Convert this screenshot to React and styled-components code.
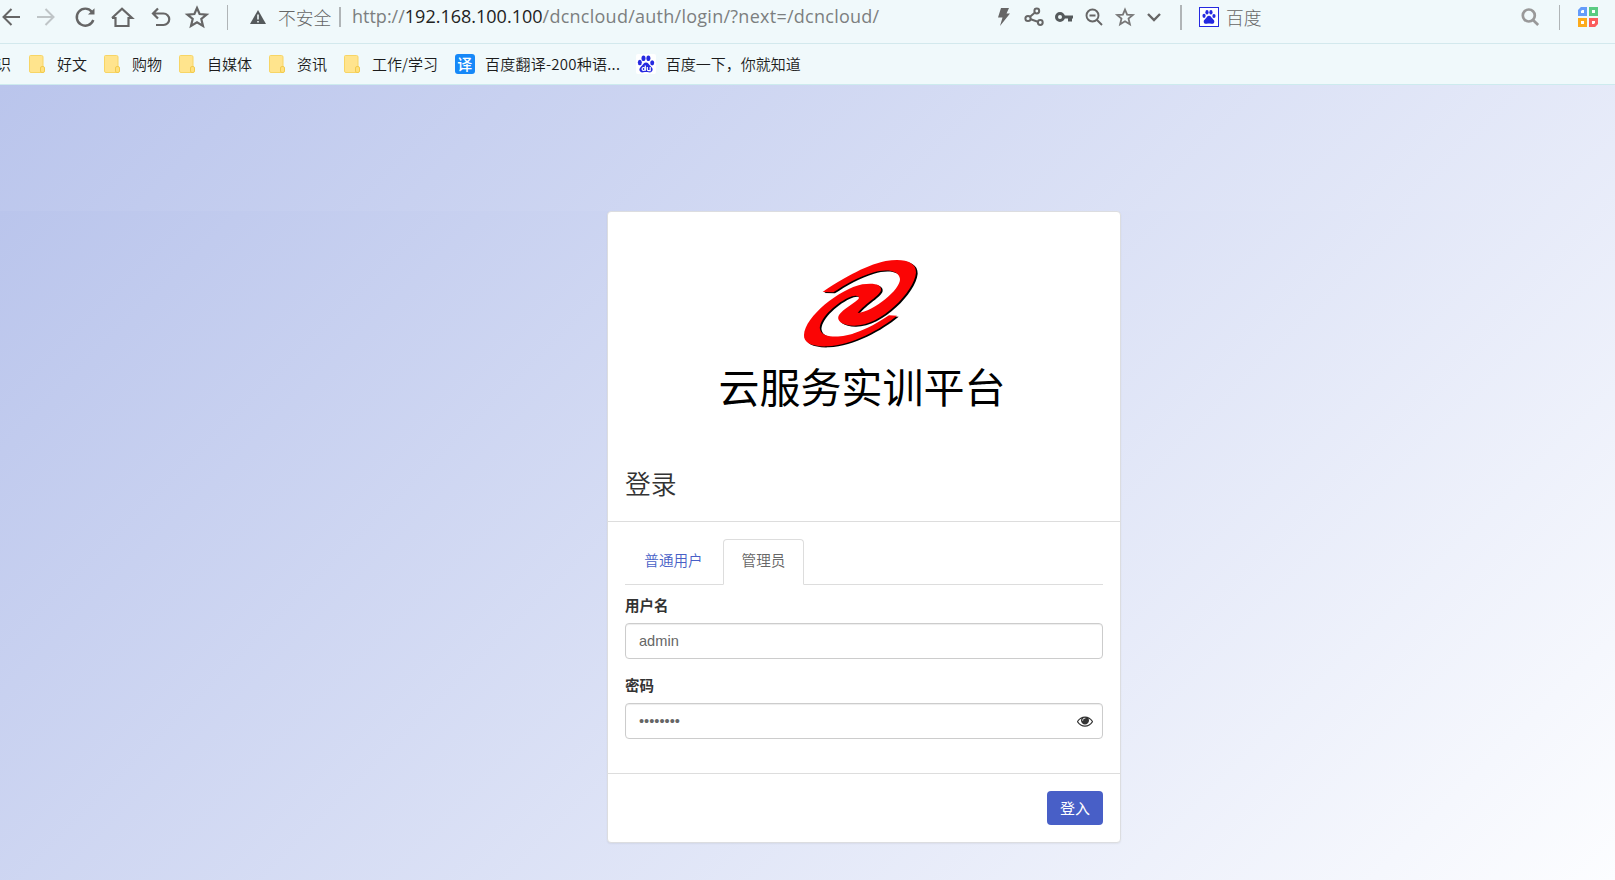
import React from "react";
import styled, { createGlobalStyle } from "styled-components";

const Global = createGlobalStyle`
  * { box-sizing: border-box; }
  html, body { margin: 0; height: 100%; overflow: hidden; }
  body { font-family: "Noto Sans CJK SC", sans-serif; color: #333; }
`;

const Window = styled.div`
  display: flex;
  flex-direction: column;
  width: 1615px;
  height: 880px;
  overflow: hidden;
`;

const AddressBar = styled.header`
  display: flex;
  align-items: center;
  flex: none;
  height: 44px;
  padding-bottom: 9px;
  background: #f0f9fb;
  border-bottom: 1px solid #d3e9ed;
`;

const Slot = styled.span`
  display: flex;
  justify-content: center;
  align-items: center;
  flex: none;
  width: ${(p) => p.$w}px;
  color: ${(p) => p.$color || "#666"};
  svg { display: block; overflow: visible; }
`;

const Divider = styled.span`
  flex: none;
  width: ${(p) => p.$w || 1}px;
  height: ${(p) => p.$h || 25}px;
  margin: 0 ${(p) => p.$right || 0}px 0 ${(p) => p.$left || 0}px;
  background: #b0b5b7;
`;

const BarText = styled.span`
  flex: none;
  width: ${(p) => p.$w}px;
  padding-bottom: 1px;
  font-size: 17.8px;
  font-weight: 300;
  line-height: 24px;
  color: #666;
  white-space: nowrap;
`;

const Url = styled.span`
  flex: none;
  width: 639px;
  padding-bottom: 2px;
  font-family: "Open Sans", "Noto Sans", sans-serif;
  font-size: 18px;
  line-height: 24px;
  color: #7c7f80;
  white-space: nowrap;
  b { font-weight: 400; color: #222; }
`;

const UrlPath = styled.span`letter-spacing: 0.26px;`;

const Spacer = styled.span`flex: 1;`;

const Gap = styled.span`
  flex: none;
  width: ${(p) => p.$w}px;
`;

const Bookmarks = styled.nav`
  display: flex;
  align-items: center;
  flex: none;
  height: 41px;
  background: #f0f9fb;
  border-bottom: 1px solid #cdebee;
`;

const Bookmark = styled.span`
  display: flex;
  align-items: center;
  flex: none;
  gap: ${(p) => p.$gap || 12}px;
  margin-right: ${(p) => p.$after || 17}px;
  font-size: 15px;
  font-weight: 350;
  line-height: 22px;
  letter-spacing: ${(p) => p.$spacing || 0}px;
  color: #1c1c1c;
  white-space: nowrap;
  svg { display: block; flex: none; }
`;

const BookmarkEdge = styled(Bookmark)`
  margin-left: -4px;
  margin-right: 18px;
`;

const TranslateIcon = styled.span`
  display: flex;
  align-items: center;
  justify-content: center;
  width: 20px;
  height: 20px;
  border-radius: 3px;
  background: #1688f8;
  color: #fff;
  font-size: 15px;
  font-weight: 500;
  line-height: 20px;
`;

const Page = styled.main`
  display: flex;
  flex: 1;
  justify-content: center;
  align-items: flex-start;
  padding: 126px 0 0 113px;
  background:
    linear-gradient(135deg, #bac5ec 0, #fcfdff 1740px) 0 0 / 100% 126px no-repeat,
    linear-gradient(135deg, #bac5ec, #fcfdff) 0 126px / 100% 670px no-repeat;
`;

const Card = styled.form`
  width: 514px;
  height: 632px;
  background: #fff;
  border: 1px solid #dcdde0;
  border-radius: 4px;
  box-shadow: 0 1px 2px rgba(0, 0, 0, 0.06);
`;

const Brand = styled.div`
  display: flex;
  flex-direction: column;
  align-items: center;
  height: 237px;
  padding-top: 38px;
  svg { display: block; margin-right: 10px; }
`;

const BrandName = styled.div`
  margin: -5px 4px 0 0;
  font-size: 41px;
  line-height: 60px;
  color: #000;
  white-space: nowrap;
`;

const Title = styled.h1`
  margin: 0;
  height: 73px;
  padding: 15px 17px 0;
  font-size: 25.8px;
  font-weight: 350;
  line-height: 38px;
  border-bottom: 1px solid #ddd;
`;

const Fields = styled.div`
  height: 252px;
  padding: 17px 17px 0 17px;
  border-bottom: 1px solid #ddd;
`;

const Tabs = styled.div`
  display: flex;
  gap: 1px;
  height: 46px;
  border-bottom: 1px solid #ddd;
`;

const Tab = styled.span`
  height: 46px;
  width: ${(p) => p.$w}px;
  padding-top: 9px;
  font-size: 14.6px;
  font-weight: 350;
  line-height: 22px;
  text-align: center;
  color: ${(p) => (p.$active ? "#666" : "#485fc7")};
  border: 1px solid ${(p) => (p.$active ? "#ddd" : "transparent")};
  border-bottom-color: ${(p) => (p.$active ? "#fff" : "transparent")};
  border-radius: 4px 4px 0 0;
`;

const Label = styled.label`
  display: block;
  height: 38px;
  padding-top: 9px;
  font-size: 14.5px;
  font-weight: 700;
  line-height: 22px;
`;

const Field = styled.div`
  display: flex;
  align-items: center;
  justify-content: space-between;
  height: 36px;
  padding: 0 9px 0 13px;
  margin-bottom: ${(p) => p.$after || 0}px;
  border: 1px solid #ccc;
  border-radius: 4px;
  box-shadow: inset 0 1px 1px rgba(0, 0, 0, 0.075);
  font-family: "Liberation Sans", sans-serif;
  font-size: 14.6px;
  color: #666;
`;

const Footer = styled.footer`
  display: flex;
  justify-content: flex-end;
  padding: 17px 17px 0 0;
`;

const Submit = styled.button`
  width: 56px;
  height: 34px;
  padding: 0 0 1px;
  border: 0;
  border-radius: 4px;
  background: #485fc7;
  color: #fff;
  font: 400 15px/22px "Noto Sans CJK SC", sans-serif;
`;

function Stroke({ w = 20, h = 20, sw = 2, d, children }) {
  return (
    <svg width={w} height={h} viewBox={`0 0 ${w} ${h}`} fill="none" stroke="currentColor" strokeWidth={sw}>
      {d && <path d={d} />}
      {children}
    </svg>
  );
}

const STAR = "M11 2 L13.6 8 L20.6 8.6 L15.3 13 L17 20 L11 16.3 L5 20 L6.700 13 L1.400 8.600 L8.400 8 Z";

function Folder() {
  return (
    <svg width="16" height="18" viewBox="0 0 16 18">
      <path d="M1.500.5h11a1.500 1.500 0 0 1 1.500 1.500v15.500H2A1.500 1.500 0 0 1 .5 16V1.500A1 1 0 0 1 1.500.5z" fill="#ffe48d" stroke="#f7d565" />
      <rect x="11.500" y="11.500" width="4" height="6" rx="1.500" fill="#ffe07c" stroke="#f2cb4e" />
    </svg>
  );
}

function Paw({ size }) {
  return (
    <svg width={size} height={size} viewBox="0 0 20 20" fill="#2529e0">
      {size > 18 && <rect width="20" height="20" rx="2" fill="#fff" />}
      <ellipse cx="3.800" cy="8.500" rx="2" ry="2.700" />
      <ellipse cx="7.500" cy="4.200" rx="2" ry="2.800" />
      <ellipse cx="12.400" cy="4.200" rx="2" ry="2.800" />
      <ellipse cx="16.200" cy="8.800" rx="2" ry="2.600" />
      <path d="M10 8.400c2 0 2.700 1.800 4 3.200 1.500 1.600 3 2.700 2.600 4.500-.4 2.300-2.500 2.500-4 2.200-1.800-.4-3.400-.4-5.200 0-1.600.3-3.600 0-4-2.200-.3-1.900 1.300-2.900 2.700-4.500C7.300 10.200 8 8.400 10 8.400z" />
      {size > 18 && (
        <g fill="none" stroke="#fff" strokeWidth="1.200">
          <circle cx="7.600" cy="15" r="1.500" />
          <path d="M9.300 11.500v5.200M11.300 13v2.400q0 1.200 1.200 1.200h1.700V13" />
        </g>
      )}
    </svg>
  );
}

const PawFrame = styled.span`
  display: flex;
  align-items: center;
  justify-content: center;
  flex: none;
  width: 20px;
  height: 20px;
  margin: 0 7px 0 17px;
  background: #fff;
  border: 1.500px solid #2529e0;
`;

const SWIRL =
  "M101 126C150 92 225 47 290 33C345 24 382 35 381 68C376 125 275 228 195 227C160 227 140 212 150 195C160 178 203 155 209 146C213 135 195 134 178 143C135 163 88 210 93 238C99 268 165 262 195 250C235 237 270 216 300 196L324 197C275 238 190 285 115 289C70 291 43 278 45 255C48 200 150 118 220 103C255 98 278 103 276 120C273 138 228 160 206 189C255 184 335 118 333 87C330 60 290 56 250 68C210 80 165 105 133 127Z";

function Swirl() {
  return (
    <svg width="140" height="110" viewBox="0 0 420 330">
      <path d={SWIRL} fill="#000" transform="translate(5 3)" />
      <path d={SWIRL} fill="#fb0505" />
    </svg>
  );
}

function Eye() {
  return (
    <svg width="16" height="16" viewBox="0 0 1792 1792" fill="#333">
      <path d="M1664 960q-152-236-381-353 61 104 61 225 0 185-131.500 316.500t-316.500 131.500-316.500-131.500-131.500-316.500q0-121 61-225-229 117-381 353 133 205 333.500 326.500t434.500 121.500 434.500-121.500 333.500-326.500zM944 576q0-20-14-34t-34-14q-125 0-214.500 89.500t-89.500 214.500q0 20 14 34t34 14 34-14 14-34q0-86 61-147t147-61q20 0 34-14t14-34zM1792 960q0 34-20 69-140 230-376.500 368.500t-499.500 138.500-499.500-139-376.500-368q-20-35-20-69t20-69q140-229 376.500-368t499.500-139 499.500 139 376.500 368q20 35 20 69z" />
    </svg>
  );
}

function Apps() {
  return (
    <svg width="20" height="20" viewBox="0 0 20 20" fill="#fff" strokeWidth="3">
      <path d="M3.500 1.500H7.500V7.500H1.500V3.500Z" stroke="#649cfb" />
      <path d="M12.500 1.500H18.500V7.500H12.500Z" stroke="#5acb83" />
      <path d="M1.500 12.500H7.500V18.500H1.500Z" stroke="#fcab1c" />
      <path d="M12.500 12.500H18.500V16.500L16.500 18.500H12.500Z" stroke="#fb5d5d" />
    </svg>
  );
}

export default function App() {
  return (
    <Window>
      <Global />
      <AddressBar>
        <Slot $w={21}><Stroke d="M19 10H2.500M10.500 2L2.500 10L10.500 18" /></Slot>
        <Slot $w={50} $color="#bfc5c7"><Stroke d="M1 10H17.500M9.500 2L17.500 10L9.500 18" /></Slot>
        <Slot $w={28}>
          <Stroke sw={2.400}>
            <path d="M18.300 13A8.500 8.500 0 1 1 16.800 4.700" />
            <path d="M19.500 1.200V7.500H13Z" fill="currentColor" stroke="none" />
          </Stroke>
        </Slot>
        <Slot $w={46}><Stroke w={22} sw={2.200} d="M1 11L11 1.800L21 11H17.500V19H4.500V11H1" /></Slot>
        <Slot $w={31}><Stroke sw={2.200} d="M7 1.500L2 6.500L7 11.500M2 6.500H12.500A5.700 5.700 0 0 1 12.500 18H5" /></Slot>
        <Slot $w={42}><Stroke w={22} h={22} sw={2.200} d={STAR} /></Slot>
        <Divider $left={9} $right={22} />
        <Slot $w={16}>
          <svg width="16" height="14" viewBox="0 0 16 14">
            <path d="M8 0L16 14H0Z" fill="#555a5c" />
            <path d="M8 4.500V9.500M8 11V12.500" stroke="#f0f9fb" strokeWidth="1.600" />
          </svg>
        </Slot>
        <Gap $w={12} />
        <BarText $w={61}>不安全</BarText>
        <Divider $w={2} $h={20} $right={11} />
        <Url>http://<b>192.168.100.100</b><UrlPath>/dcncloud/auth/login/?next=/dcncloud/</UrlPath></Url>
        <Slot $w={26}>
          <svg width="12" height="18" viewBox="0 0 12 18"><path d="M3 0H11L8.500 5.500H12L2 18L4.500 9.500H0Z" fill="#666" /></svg>
        </Slot>
        <Slot $w={33}>
          <Stroke sw={2}>
            <circle cx="4" cy="11.500" r="2.600" /><circle cx="12.800" cy="4" r="2.400" /><circle cx="16.300" cy="15.500" r="2.400" />
            <path d="M6 9.800L11 5.600M6.700 12.300L13.800 14.700" />
          </Stroke>
        </Slot>
        <Slot $w={28}>
          <svg width="18" height="12" viewBox="0 0 18 12">
            <circle cx="5" cy="6" r="3.500" fill="none" stroke="#555a5c" strokeWidth="3" />
            <path d="M8.500 4.500H18V7.500H17V10.500H13V7.500H8.500Z" fill="#555a5c" />
          </svg>
        </Slot>
        <Slot $w={32}><Stroke w={18} h={18} sw={1.900}><circle cx="7.500" cy="7.500" r="6" /><path d="M12 12L17 17M4.500 7.500H10.500" /></Stroke></Slot>
        <Slot $w={29}>
          <svg width="18" height="18" viewBox="0 0 22 22" fill="none" stroke="#777" strokeWidth="2.200"><path d={STAR} /></svg>
        </Slot>
        <Slot $w={30}><Stroke w={14} h={10} sw={2.400} d="M1 2L7 8L13 2" /></Slot>
        <Divider $w={2} $left={11} />
        <PawFrame><Paw size={16} /></PawFrame>
        <BarText $w={40}>百度</BarText>
        <Spacer />
        <Slot $w={20} $color="#999">
          <Stroke w={18} h={18} sw={2.700}><circle cx="7.800" cy="7.500" r="6" /><path d="M12 12L17.200 17" /></Stroke>
        </Slot>
        <Divider $left={19} $right={18} />
        <Slot $w={20}><Apps /></Slot>
        <Gap $w={17} />
      </AddressBar>

      <Bookmarks>
        <BookmarkEdge>识</BookmarkEdge>
        {["好文", "购物", "自媒体", "资讯", "工作/学习"].map((name) => (
          <Bookmark key={name}><Folder />{name}</Bookmark>
        ))}
        <Bookmark $gap={10} $after={15.5} $spacing={0.25}><TranslateIcon>译</TranslateIcon>百度翻译-200种语...</Bookmark>
        <Bookmark $gap={10}><Paw size={20} />百度一下，你就知道</Bookmark>
      </Bookmarks>

      <Page>
        <Card>
          <Brand>
            <Swirl />
            <BrandName>云服务实训平台</BrandName>
          </Brand>
          <Title>登录</Title>
          <Fields>
            <Tabs>
              <Tab $w={97}>普通用户</Tab>
              <Tab $w={81} $active>管理员</Tab>
            </Tabs>
            <Label>用户名</Label>
            <Field $after={6}>admin</Field>
            <Label>密码</Label>
            <Field><span>••••••••</span><Eye /></Field>
          </Fields>
          <Footer><Submit type="button">登入</Submit></Footer>
        </Card>
      </Page>
    </Window>
  );
}
